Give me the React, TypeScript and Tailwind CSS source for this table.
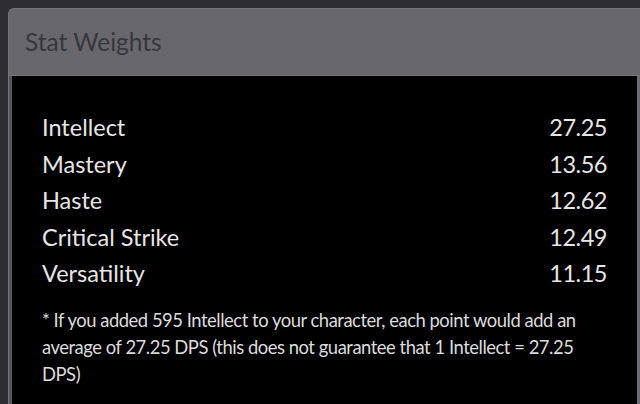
const stats = [
  { name: "Intellect", value: "27.25" },
  { name: "Mastery", value: "13.56" },
  { name: "Haste", value: "12.62" },
  { name: "Critical Strike", value: "12.49" },
  { name: "Versatility", value: "11.15" },
];

export default function App() {
  return (
    <div className="w-[640px] h-[404px] overflow-hidden bg-[#2e2d33] pt-2 pl-2 font-['Lato',sans-serif]">
      <div className="h-full rounded-tl-md border-t border-l border-[#75747a] bg-[#68676d] flex flex-col">
        <div className="h-[67px] shrink-0 flex items-center px-4 border-b border-[#78777c]">
          <h2 className="text-[24.5px] text-[#38373d] leading-none">Stat Weights</h2>
        </div>
        <div className="flex-1 bg-black border-l-[3px] border-r-[3px] border-l-[#55545a] border-r-[#6c6b70] px-[30px] pt-[33px]">
          <div>
            {stats.map((s) => (
              <div
                key={s.name}
                className="flex justify-between text-[23.5px] leading-[36.5px] text-[#e6e6e6]"
              >
                <span>{s.name}</span>
                <span className="tracking-[-0.02em]">{s.value}</span>
              </div>
            ))}
          </div>
          <p className="mt-[15px] text-[18.4px] leading-[27px] tracking-[-0.025em] text-[#dcdcdc]">
            * If you added 595 Intellect to your character, each point would add an average of
            27.25 DPS (this does not guarantee that 1 Intellect = 27.25 DPS)
          </p>
        </div>
      </div>
    </div>
  );
}
